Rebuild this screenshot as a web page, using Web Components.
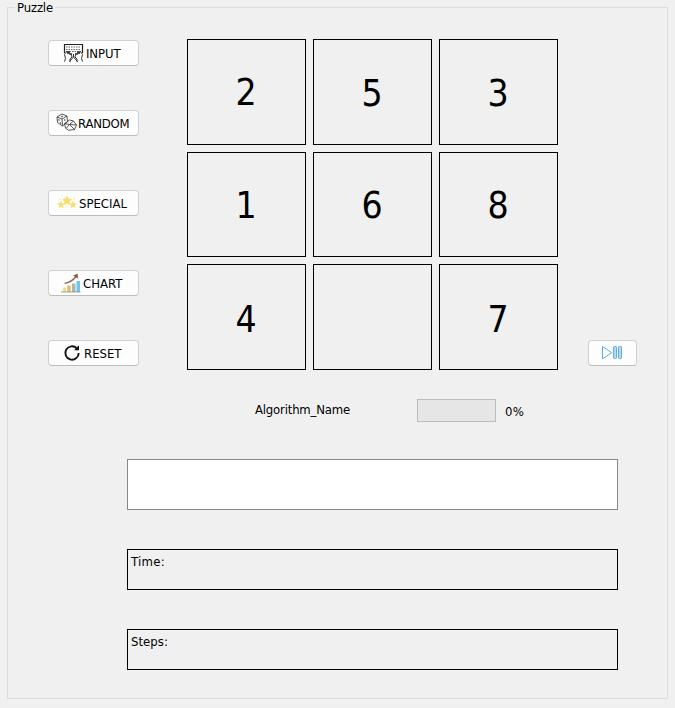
<!DOCTYPE html>
<html lang="en">
<head>
<meta charset="utf-8">
<title>Puzzle</title>
<style>
html,body{margin:0;width:675px;height:708px;overflow:hidden;background:#f0f0f0}
body{font:13px/16px "DejaVu Sans Condensed","DejaVu Sans",sans-serif;font-stretch:condensed;color:#000}
</style>
</head>
<body>
<puzzle-app></puzzle-app>
<script>
const define = (name, html, connected) => customElements.define(name, class extends HTMLElement {
  constructor() {
    super();
    const t = document.createElement('template');
    t.innerHTML = html;
    this.attachShadow({mode: 'open'}).append(t.content.cloneNode(true));
  }
  connectedCallback() { if (connected) connected.call(this); }
});

/* A label whose letter spacing is adjusted to fill a given advance width. */
define('fit-label', `<style>
  :host{display:block;white-space:nowrap} span{display:inline-block}
</style><span></span>`, function () {
  const s = this.shadowRoot.querySelector('span');
  const text = this.getAttribute('text');
  s.textContent = text;
  const natural = s.getBoundingClientRect().width;
  s.style.letterSpacing = (Number(this.getAttribute('width')) - natural) / text.length + 'px';
});

const icons = {
  input: `<g fill="none" stroke="#222" stroke-width="1"><path d="M1.500 10V1.500h18V10" stroke-width="1.2"/>
    <path d="M3 4h15M3 6.500h15M4 8.500h12" stroke-dasharray="1.5 1" stroke="#666"/>
    <path d="M1.500 18.500l1-3-1-4L4 8l1 3 1-3 1 4 1-2 1 4-2 2v3M19.500 18.500l-1-3 1-4L17 8l-1 3-1-3-1 4-1-2-1 4 2 2v3M10.500 11v3l-4 4.500M10.500 14l4 4.500" stroke="#333"/></g>`,
  random: `<g fill="none" stroke="#444" stroke-width=".9"><path d="M1 4l5-3 5 2 .5 6-5 4-5-3.500zM1 4l5 2 5-3M6 6l.5 7M8.500 10.500l5-3.500 4 1 3 4-2 4.500-6 .8-3-2.300zM8.500 10.500l5 1-3.500 4M13.500 11.500l7 .5M13.500 11.500l4-3.500M13.500 11.500l5 5"/>
    <circle cx="6" cy="3.500" r=".5"/><circle cx="3" cy="7" r=".4"/><circle cx="4.500" cy="10" r=".4"/><circle cx="8.800" cy="7" r=".4"/></g>`,
  special: `<g fill="#f8df70"><path d="M10 2.500l1.700 3 3.300.6-2.300 2.500.3 3.300-3-1.400-3 1.400.3-3.300L5 6.100l3.300-.6z"/>
    <path d="M4 8l1.200 2.200 2.500.4-1.800 1.900.4 2.500L4 13.900 1.700 15l.4-2.500L.3 10.600l2.500-.4zM16 8l1.200 2.200 2.500.4-1.800 1.900.4 2.500-2.300-1.100-2.300 1.100.4-2.500-1.800-1.900 2.500-.4z"/>
    <circle cx="3" cy="6" r=".7"/><circle cx="17" cy="6" r=".7"/><circle cx="10" cy="14" r=".7"/><circle cx="5.500" cy="3" r=".5"/></g>`,
  chart: `<path d="M2 14.500h3v4.500H2z" fill="#f7da86"/><path d="M6.200 12.500h3.600V19H6.200z" fill="#e5bd7a"/><path d="M11 10.500h3.500V19H11z" fill="#a9bda5"/><path d="M15.500 8h3.500v11h-3.500z" fill="#73c4ee"/>
    <path d="M0 19h19.500" stroke="#8b9b9d" stroke-width=".9"/><path d="M3.500 10.300C9 9.800 12 7.500 15.500 3" fill="none" stroke="#96614c" stroke-width="1.300"/><path d="M12.200 2.400L16.700.8l.2 4.700z" fill="#85523f"/>`,
  reset: `<path d="M14.800 5.300A6.700 6.700 0 1 0 16.700 10" fill="none" stroke="#111" stroke-width="1.900"/><path d="M12 7.300h5V2.200z" fill="#111"/>`,
  play: `<path d="M1.500 3.500v12.400L10.600 9.700z" fill="#fff" stroke="#5aaee6" stroke-width="1"/>
    <g fill="#b9d7ec" stroke="#5aaee6"><rect x="12.500" y="3.500" width="3" height="12" rx=".8"/><rect x="17.500" y="3.500" width="3" height="12" rx=".8"/></g>`
};

define('tool-button', `<style>
  :host{display:flex;box-sizing:border-box;height:26px;align-items:center;gap:var(--gap,2px);padding-left:var(--pad,12px);
    border:1px solid #d0d0d0;border-bottom-color:#bcbcbc;border-radius:4px;background:#fdfdfd}
  svg{display:block;flex:none;width:22px;height:20px}
  ::slotted(*){padding-top:1px}
</style><svg viewBox="0 0 22 20"></svg><slot></slot>`, function () {
  this.shadowRoot.querySelector('svg').innerHTML = icons[this.getAttribute('icon')];
});

define('puzzle-tile', `<style>
  :host{display:flex;box-sizing:border-box;border:1px solid #000;align-items:center;justify-content:center;font-size:37px;line-height:44px}
  span{padding-top:var(--drop,3px);padding-right:1px}
</style><span><slot></slot></span>`);

define('info-box', `<style>
  :host{display:block;box-sizing:border-box;border:1px solid #000;height:41px;padding:4px 3px}
  :host([editor]){height:51px;border-color:#828790;background:#fff}
</style><slot></slot>`);

define('progress-meter', `<style>
  :host{display:flex;gap:9px}
  div{box-sizing:border-box;width:79px;height:23px;border:1px solid #bcbcbc;background:#e6e6e6}
  ::slotted(*){margin-top:5px}
</style><div></div><slot></slot>`);

define('group-box', `<style>
  :host{display:block;box-sizing:border-box;width:661px;height:692px;border:1px solid #dcdcdc}
  header{display:block;width:37px;height:16px;margin:-8px 0 -1px 7px;padding:0 1px 0 2px;background:#f0f0f0}
</style><header><slot name="title"></slot></header><slot></slot>`);

define('puzzle-app', `<style>
  :host{display:block;padding:7px}
  .top{display:grid;grid-template-columns:91px 48px 371px 30px 49px;margin:24px 0 0 40px;height:331px}
  .tools{display:flex;flex-direction:column;padding-top:1px}
  .tools tool-button:nth-child(2),.tools tool-button:nth-child(5){margin-top:44px}
  .tools tool-button:nth-child(3),.tools tool-button:nth-child(4){margin-top:54px}
  .board{grid-column:3;display:grid;grid-template-columns:repeat(3,119px);grid-template-rows:106px 105px 106px;gap:7px}
  .play{grid-column:5;padding-top:301px}
  .status{display:flex;margin:29px 0 0 247px;height:60px}
  .status>fit-label{width:162px;margin-top:3px}
  .boxes{display:grid;row-gap:39px;margin-left:119px;width:491px}
</style>
<group-box>
  <fit-label slot="title" text="Puzzle" width="36"></fit-label>
  <div class="top">
    <div class="tools">
      <tool-button icon="input" style="--pad:14px;--gap:1px"><fit-label text="INPUT" width="34.500"></fit-label></tool-button>
      <tool-button icon="random" style="--pad:7px;--gap:0px"><fit-label text="RANDOM" width="51.500"></fit-label></tool-button>
      <tool-button icon="special" style="--pad:8px;--gap:0px"><fit-label text="SPECIAL" width="48"></fit-label></tool-button>
      <tool-button icon="chart" style="--pad:12px;--gap:0px"><fit-label text="CHART" width="39.500"></fit-label></tool-button>
      <tool-button icon="reset" style="--pad:13px;--gap:0px"><fit-label text="RESET" width="37.500"></fit-label></tool-button>
    </div>
    <div class="board">
      <puzzle-tile style="--drop:2px">2</puzzle-tile><puzzle-tile>5</puzzle-tile><puzzle-tile>3</puzzle-tile>
      <puzzle-tile>1</puzzle-tile><puzzle-tile>6</puzzle-tile><puzzle-tile>8</puzzle-tile>
      <puzzle-tile style="--drop:5px">4</puzzle-tile><puzzle-tile></puzzle-tile><puzzle-tile style="--drop:5px">7</puzzle-tile>
    </div>
    <div class="play"><tool-button icon="play"></tool-button></div>
  </div>
  <div class="status">
    <fit-label text="Algorithm_Name" width="95"></fit-label>
    <progress-meter><fit-label text="0%" width="19"></fit-label></progress-meter>
  </div>
  <div class="boxes">
    <info-box editor></info-box>
    <info-box><fit-label text="Time:" width="34"></fit-label></info-box>
    <info-box><fit-label text="Steps:" width="37"></fit-label></info-box>
  </div>
</group-box>`);
</script>
</body>
</html>
